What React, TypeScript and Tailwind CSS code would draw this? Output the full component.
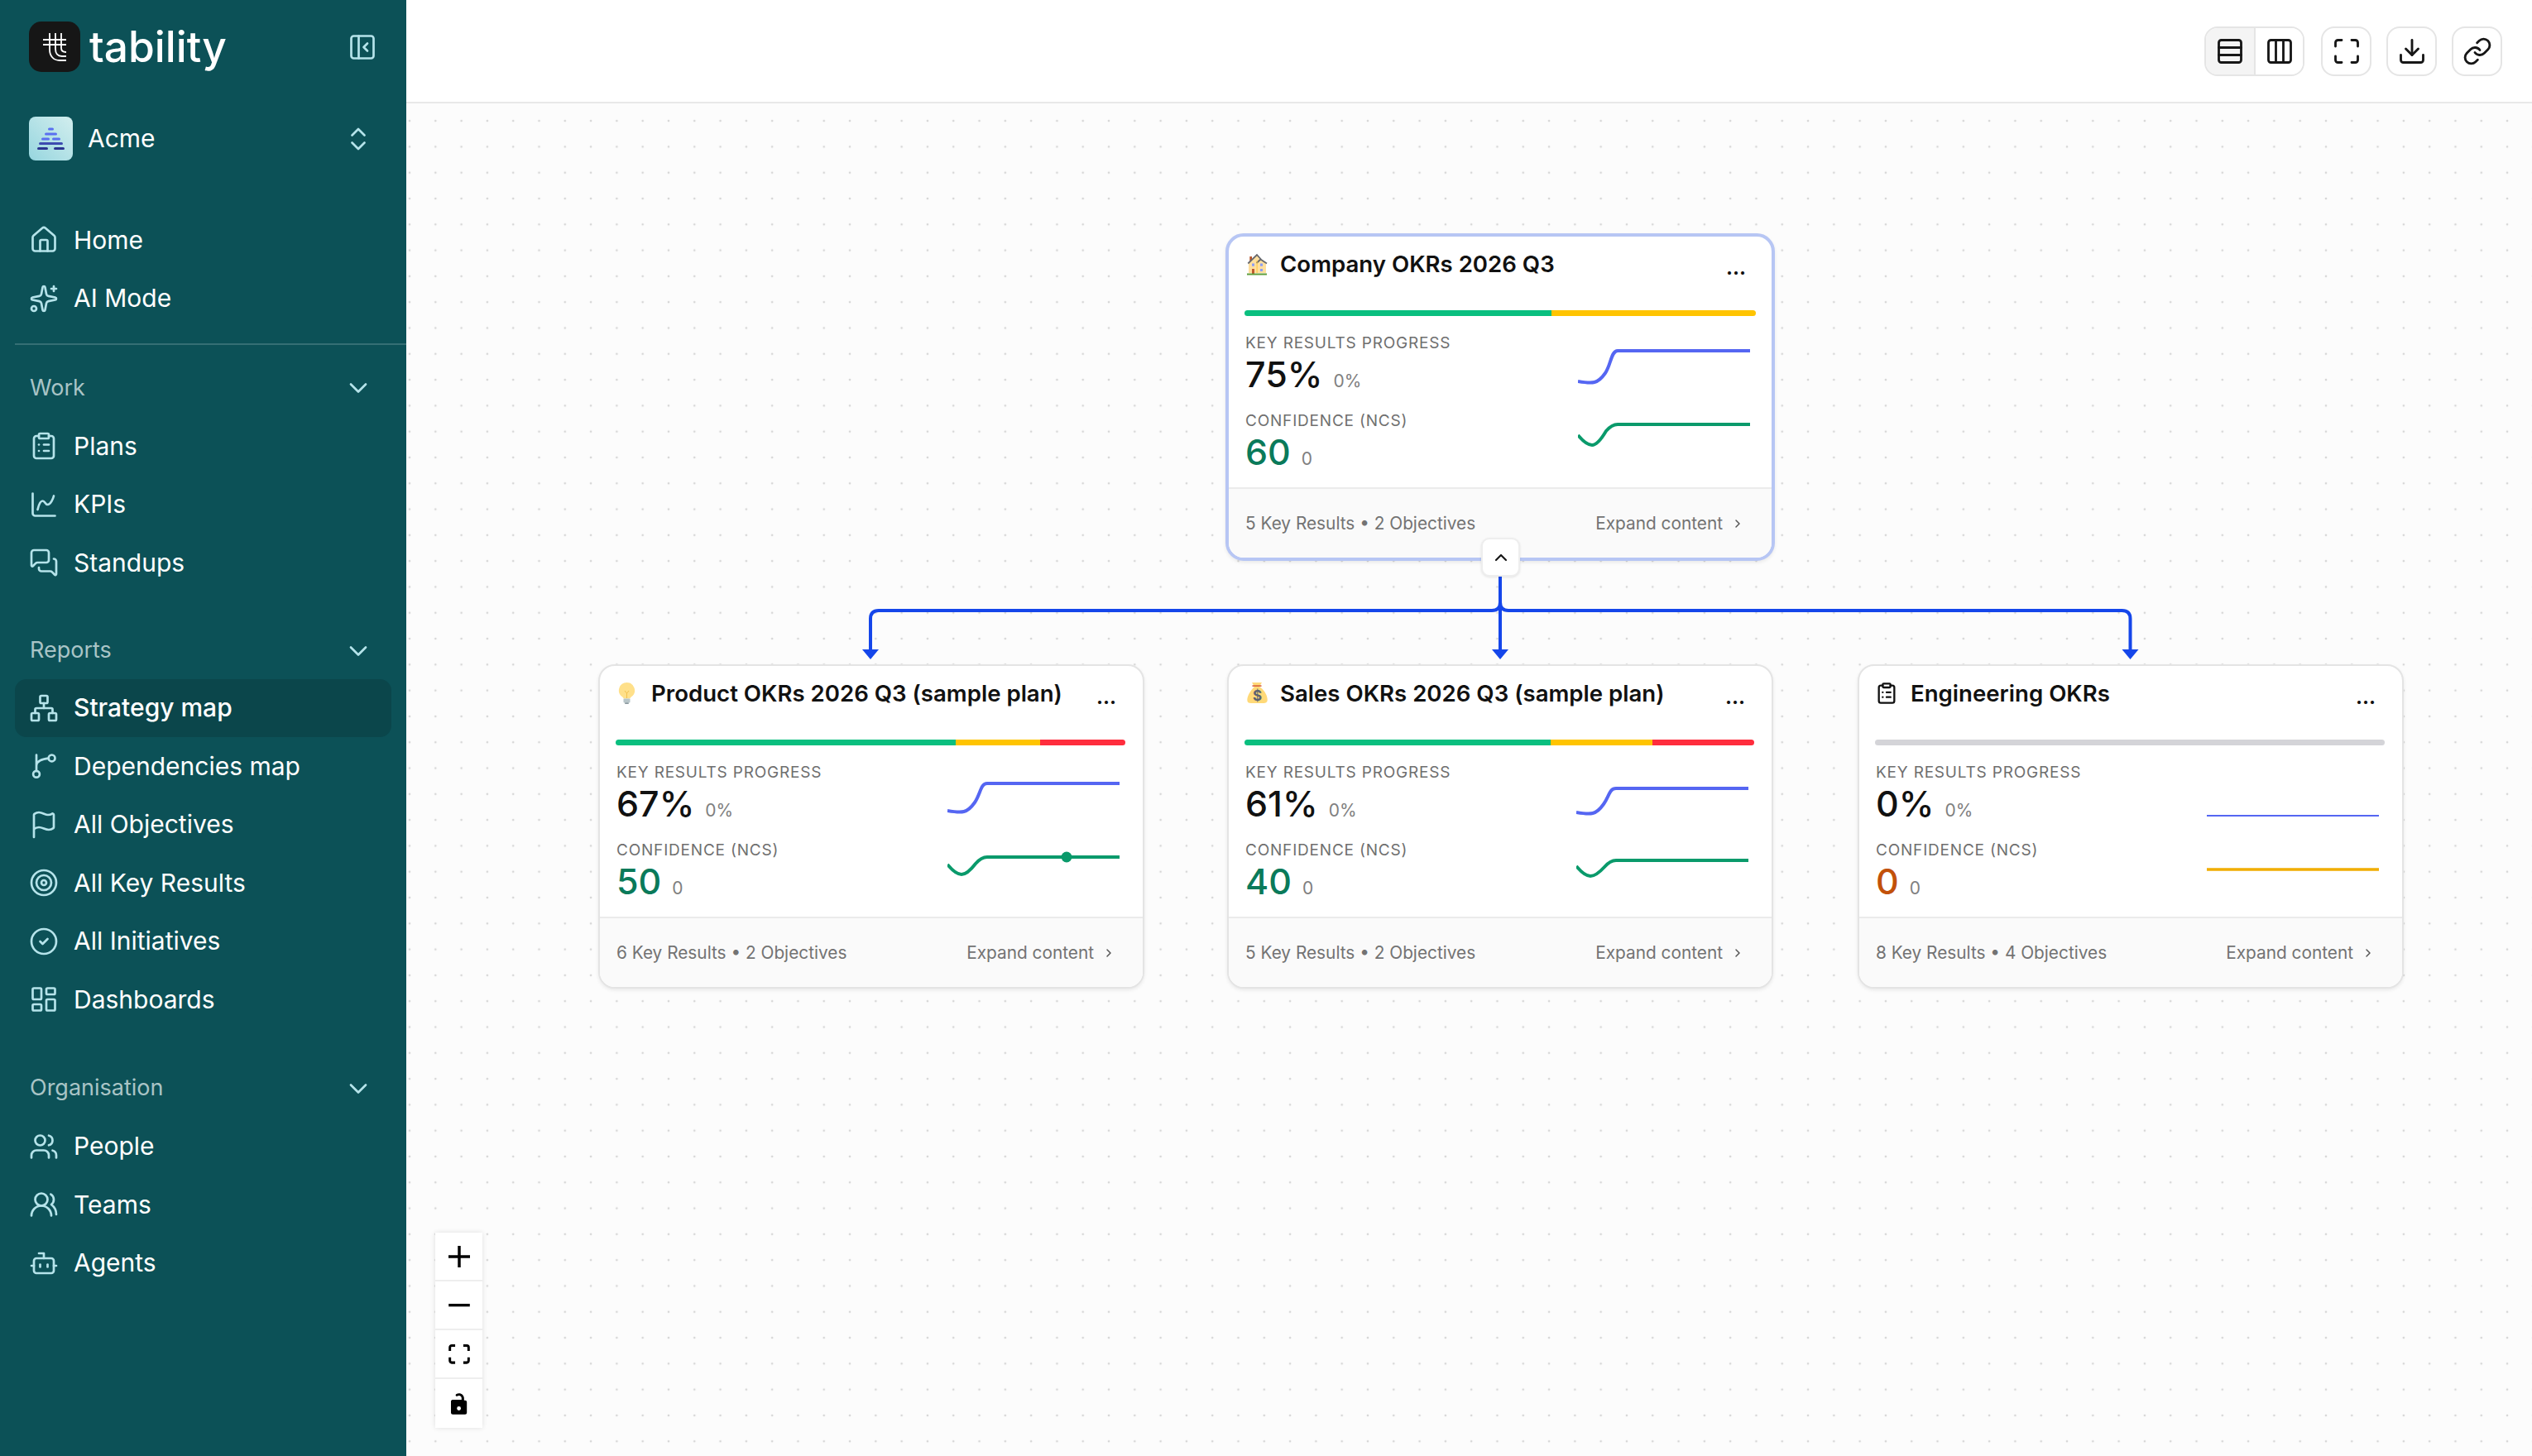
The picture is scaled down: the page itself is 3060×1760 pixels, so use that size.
import React from 'react';
import {
  Bot, ChartSpline, ChevronDown, ChevronRight, ChevronUp, ChevronsUpDown, CircleCheck, ClipboardList,
  Columns3, Download, Flag, House, LayoutDashboard, Link, Maximize, MessagesSquare, Network,
  PanelLeftClose, Rows3, Sparkles, Target, Users, UsersRound,
} from 'lucide-react';

const DependenciesIcon = ({ size, color, strokeWidth }: { size: number; color: string; strokeWidth: number }) => (
  <svg width={size} height={size} viewBox="0 0 24 24" fill="none" stroke={color} strokeWidth={strokeWidth} strokeLinecap="round">
    <circle cx="6" cy="18.5" r="2.6" />
    <circle cx="18.4" cy="5.6" r="2.6" />
    <path d="M6 3v13M15.8 5.8C10.5 6.3 6.5 7.5 6 11.5" />
  </svg>
);

const navIcon = { size: 36, color: '#b5e3ea', strokeWidth: 1.8 };

const sections = [
  {
    title: 'Work',
    gap: 'mt-[32px]',
    rowsGap: 'mt-[15px]',
    items: [
      { label: 'Plans', icon: ClipboardList },
      { label: 'KPIs', icon: ChartSpline },
      { label: 'Standups', icon: MessagesSquare },
    ],
  },
  {
    title: 'Reports',
    gap: 'mt-[51px]',
    rowsGap: 'mt-[14px]',
    items: [
      { label: 'Strategy map', icon: Network, active: true },
      { label: 'Dependencies map', icon: DependenciesIcon },
      { label: 'All Objectives', icon: Flag },
      { label: 'All Key Results', icon: Target },
      { label: 'All Initiatives', icon: CircleCheck },
      { label: 'Dashboards', icon: LayoutDashboard },
    ],
  },
  {
    title: 'Organisation',
    gap: 'mt-[52px]',
    rowsGap: 'mt-[15px]',
    items: [
      { label: 'People', icon: Users },
      { label: 'Teams', icon: UsersRound },
      { label: 'Agents', icon: Bot },
    ],
  },
];

const NavRow = ({ label, icon: Icon, active }: { label: string; icon: React.ElementType; active?: boolean }) => (
  <div className={`ml-[18px] mr-[18px] flex h-[70.5px] items-center gap-[18px] rounded-[14px] pl-[17px] ${active ? 'bg-[#0b464b]' : ''}`}>
    <Icon {...navIcon} />
    <span className={`text-[30px] text-white ${active ? 'font-medium' : ''}`}>{label}</span>
  </div>
);

const Sidebar = () => (
  <aside className="flex h-[1760px] w-[491px] shrink-0 flex-col bg-[#0c5157] pt-[26px]">
    <div className="flex items-center justify-between pl-[35px] pr-[35px]">
      <div className="flex items-center gap-[11px]">
        <div className="flex h-[61px] w-[62px] items-center justify-center rounded-[15px] bg-[#161616]">
          <svg width="62" height="61" viewBox="0 0 62 61" fill="none" stroke="#fff" strokeWidth="1.8">
            <path d="M17 22H45M17 28H45" />
            <path d="M25 14V34c0 8 5 13 12 13h8M32 14V33c0 6 3 9 8 9h5M39 14V32c0 3 2 5 6 5" />
          </svg>
        </div>
        <span className="text-[51.5px] font-medium leading-none text-white">tability</span>
      </div>
      <PanelLeftClose size={36} color="#b5e3ea" strokeWidth={1.8} />
    </div>

    <div className="mt-[54px] flex items-center justify-between pl-[35px] pr-[40px]">
      <div className="flex items-center gap-[18px]">
        <div className="h-[53px] w-[53px] rounded-[8px] bg-linear-to-tr from-[#96d6df] to-[#d2eeee]">
          <svg width="53" height="53" viewBox="0 0 53 53">
            <g fill="#5a6ff0">
              <rect x="23" y="13.5" width="7" height="3" rx="1.5" />
              <rect x="19" y="19.5" width="15" height="3" rx="1.5" />
              <rect x="15" y="25.5" width="10" height="3" rx="1.5" />
              <rect x="28" y="25.5" width="10" height="3" rx="1.5" />
            </g>
            <rect x="12" y="31" width="29" height="3" rx="1.5" fill="#3d4bb0" />
            <rect x="10" y="37" width="13" height="3" rx="1.5" fill="#2b3590" />
            <rect x="30" y="37" width="13" height="3" rx="1.5" fill="#2b3590" />
          </svg>
        </div>
        <span className="text-[30px] text-white">Acme</span>
      </div>
      <ChevronsUpDown size={36} color="#b5e3ea" strokeWidth={1.8} />
    </div>

    <nav className="mt-[61px]">
      <NavRow label="Home" icon={House} />
      <NavRow label="AI Mode" icon={Sparkles} />
    </nav>
    <div className="ml-[18px] mt-[19px] h-[2px] bg-[#356f74]" />

    {sections.map((section) => (
      <section key={section.title} className={section.gap}>
        <div className="flex h-[40px] items-center justify-between pl-[36px] pr-[40px]">
          <span className="text-[27px] text-[#a9c4c6]">{section.title}</span>
          <ChevronDown size={36} color="#b5e3ea" strokeWidth={1.8} />
        </div>
        <div className={section.rowsGap}>
          {section.items.map((item) => (
            <NavRow key={item.label} {...item} />
          ))}
        </div>
      </section>
    ))}
  </aside>
);

const TopButton = ({ children }: { children: React.ReactNode }) => (
  <div className="flex h-[60px] w-[61px] items-center justify-center rounded-[16px] border-2 border-[#e5e5e5] bg-white">{children}</div>
);

const toolIcon = { size: 36, color: '#171717', strokeWidth: 1.9 };

const TopBar = () => (
  <header className="flex h-[125px] items-center justify-end border-b-2 border-[#e8e8e8] bg-white pr-[36px]">
    <div className="flex h-[60px] w-[121px] overflow-hidden rounded-[16px] border-2 border-[#e5e5e5]">
      <div className="flex w-[60px] items-center justify-center border-r-2 border-[#e5e5e5] bg-[#f4f4f4]">
        <Rows3 {...toolIcon} />
      </div>
      <div className="flex flex-1 items-center justify-center bg-white">
        <Columns3 {...toolIcon} />
      </div>
    </div>
    <div className="ml-[20px] flex gap-[18px]">
      <TopButton><Maximize {...toolIcon} /></TopButton>
      <TopButton><Download {...toolIcon} /></TopButton>
      <TopButton><Link {...toolIcon} /></TopButton>
    </div>
  </header>
);

const HouseEmoji = () => (
  <svg width="28" height="28" viewBox="0 0 28 28">
    <rect x="6.3" y="5" width="2.7" height="6" fill="#b5532a" />
    <path d="M5 13.5 15 3l5 5 6 6v11H5z" fill="#ffdf9e" />
    <path d="M4.3 13.5 15 3l5 5.5M14.5 13 19.5 8.5 27 13.5" fill="none" stroke="#66686e" strokeWidth="1.8" />
    <rect x="14.6" y="10" width="1" height="15" fill="#ffc83d" />
    <rect x="9" y="20" width="3" height="6" fill="#c05a2f" />
    <g fill="#8c9df5">
      <rect x="9" y="13.5" width="3" height="3.2" />
      <rect x="19" y="13.5" width="3" height="3.2" />
      <rect x="19" y="20" width="3" height="3" />
    </g>
    <rect x="3" y="25.5" width="24" height="2" fill="#5f9e3a" />
  </svg>
);

const BulbEmoji = () => (
  <svg width="28" height="28" viewBox="0 0 28 28">
    <path d="M13.5 1a9.5 9.5 0 0 0-5.6 17.2c1 .8 1.6 1.6 1.6 2.3h8c0-.7.6-1.5 1.6-2.3A9.5 9.5 0 0 0 13.5 1z" fill="#ffe08a" />
    <path d="M11 11l2.5 3 2.5-3M13.5 14v6" fill="none" stroke="#f2c14e" strokeWidth="1" />
    <rect x="9.5" y="20.5" width="8" height="5" rx="1" fill="#b8c5c9" />
    <rect x="11" y="25.2" width="5" height="1.8" rx="0.9" fill="#8b999e" />
  </svg>
);

const BagEmoji = () => (
  <svg width="28" height="28" viewBox="0 0 28 28">
    <path d="M9 1h12l-3 5c5 3 10 10 9.7 16 0 3-2 4-5 4H8c-3 0-4.700-1-4.700-4C3.300 16 9 9 12 6z" fill="#ffd978" />
    <rect x="9.5" y="4.300" width="11" height="1.6" fill="#d9603a" />
    <text x="15.5" y="23" textAnchor="middle" fontSize="17" fontWeight="700" fill="#5c6270">$</text>
  </svg>
);

interface Plan {
  title: string;
  emoji: React.ReactNode;
  position: string;
  selected?: boolean;
  bar: { color: string; width: string }[];
  progress: string;
  score: string;
  scoreColor: string;
  footer: string;
  blue: [number, number];
  green: [number, number];
  dotX?: number;
}

const Sparkline = ({ plan }: { plan: Plan }) => (
  <svg width="208" height="164" viewBox="0 0 208 164" fill="none" className="-mt-[1px] mr-[7px]">
    {plan.title === 'Engineering OKRs' ? (
      <>
        <path d="M0 65H208" stroke="#5566f2" strokeWidth="2" />
        <path d="M0 130H208" stroke="#f0ad00" strokeWidth="3.5" />
      </>
    ) : (
      <>
        <path
          d={`M0 ${plan.blue[1]} C 18 ${plan.blue[1] + 3} 24 ${plan.blue[1] + 3} 33 ${plan.blue[1] - 10} C 40 ${plan.blue[1] - 20} 40 ${plan.blue[0]} 48 ${plan.blue[0]} H208`}
          stroke="#5566f2"
          strokeWidth="4"
        />
        <path
          d={`M0 ${plan.green[1]} Q 10 ${plan.green[1] + 12} 17 ${plan.green[1] + 12} Q 24 ${plan.green[1] + 12} 34 ${plan.green[0] + 8} Q 41 ${plan.green[0]} 48 ${plan.green[0]} H208`}
          stroke="#0a9a6b"
          strokeWidth="4"
        />
        {plan.dotX && <circle cx={plan.dotX} cy={plan.green[0]} r="6.5" fill="#0a9a6b" />}
      </>
    )}
  </svg>
);

const PlanCard = ({ plan }: { plan: Plan }) => (
  <div
    className={`absolute overflow-hidden bg-white shadow-[0_2px_4px_rgba(0,0,0,0.08)] ${plan.position} ${
      plan.selected ? 'rounded-[22px] border-4 border-[#b7c6f4]' : 'rounded-[20px] border-2 border-[#e4e4e4]'
    }`}
  >
    <div className={`pl-[19px] pt-[15px] ${plan.selected ? 'pr-[19px]' : 'pr-[21px]'}`}>
      <div className="flex h-[36px] items-center gap-[15px]">
        <span className="h-[28px] w-[28px] shrink-0">{plan.emoji}</span>
        <span className="text-[27.6px] font-semibold leading-[36px] text-[#111]">{plan.title}</span>
      </div>
      <div className="mt-[38px] flex h-[7px] overflow-hidden rounded-full">
        {plan.bar.map((part) => (
          <div key={part.color} className={`${part.color} ${part.width}`} />
        ))}
      </div>
      <div className="mt-[21px] flex h-[164px] justify-between">
        <div className="ml-[1px]">
          <div className="text-[19px] leading-[24px] tracking-[0.8px] text-[#6f6f6f]">KEY RESULTS PROGRESS</div>
          <div className="mt-[3px] flex h-[44px] items-baseline gap-[13px]">
            <span className="text-[43px] font-medium leading-[44px] text-[#111]">{plan.progress}</span>
            <span className="text-[21px] text-[#808080]">0%</span>
          </div>
          <div className="mt-[23px] text-[19px] leading-[24px] tracking-[0.8px] text-[#6f6f6f]">CONFIDENCE (NCS)</div>
          <div className="mt-[3px] flex h-[44px] items-baseline gap-[13px]">
            <span className={`text-[43px] font-medium leading-[44px] ${plan.scoreColor}`}>{plan.score}</span>
            <span className="text-[21px] text-[#808080]">0</span>
          </div>
        </div>
        <Sparkline plan={plan} />
      </div>
    </div>
    <div className="mt-[22px] flex h-[85px] items-center justify-between border-t-2 border-[#ebebeb] bg-[#fafafa] pl-[20px] pr-[33px] text-[20.8px] text-[#737373]">
      <span>{plan.footer}</span>
      <span className="flex items-center gap-[10px]">
        Expand content
        <ChevronRight size={16} color="#555" strokeWidth={2.2} />
      </span>
    </div>
    <span className={`absolute top-[26px] text-[24px] font-bold leading-[24px] text-[#111] ${plan.selected ? 'right-[31px]' : 'right-[32px]'}`}>...</span>
  </div>
);

const plans: Plan[] = [
  {
    title: 'Company OKRs 2026 Q3',
    emoji: <HouseEmoji />,
    position: 'left-[990px] top-[157px] w-[664px]',
    selected: true,
    bar: [
      { color: 'bg-[#0abf7f]', width: 'w-[60%]' },
      { color: 'bg-[#ffc400]', width: 'w-[40%]' },
    ],
    progress: '75%',
    score: '60',
    scoreColor: 'text-[#0a7a5a]',
    footer: '5 Key Results • 2 Objectives',
    blue: [22, 59],
    green: [111, 124],
  },
  {
    title: 'Product OKRs 2026 Q3 (sample plan)',
    emoji: <BulbEmoji />,
    position: 'left-[232px] top-[678px] w-[660px]',
    bar: [
      { color: 'bg-[#0abf7f]', width: 'w-[66.7%]' },
      { color: 'bg-[#ffc400]', width: 'w-[16.6%]' },
      { color: 'bg-[#ff2d3d]', width: 'w-[16.7%]' },
    ],
    progress: '67%',
    score: '50',
    scoreColor: 'text-[#0a7a5a]',
    footer: '6 Key Results • 2 Objectives',
    blue: [26, 59],
    green: [115, 124],
    dotX: 144,
  },
  {
    title: 'Sales OKRs 2026 Q3 (sample plan)',
    emoji: <BagEmoji />,
    position: 'left-[992px] top-[678px] w-[660px]',
    bar: [
      { color: 'bg-[#0abf7f]', width: 'w-[60%]' },
      { color: 'bg-[#ffc400]', width: 'w-[20%]' },
      { color: 'bg-[#ff2d3d]', width: 'w-[20%]' },
    ],
    progress: '61%',
    score: '40',
    scoreColor: 'text-[#0a7a5a]',
    footer: '5 Key Results • 2 Objectives',
    blue: [32, 61],
    green: [119, 126],
  },
  {
    title: 'Engineering OKRs',
    emoji: <ClipboardList size={28} color="#111" strokeWidth={2} />,
    position: 'left-[1754px] top-[678px] w-[660px]',
    bar: [{ color: 'bg-[#d4d4d8]', width: 'w-full' }],
    progress: '0%',
    score: '0',
    scoreColor: 'text-[#c2510a]',
    footer: '8 Key Results • 4 Objectives',
    blue: [65, 65],
    green: [130, 130],
  },
];

const Edges = () => (
  <svg className="pointer-events-none absolute left-0 top-0" width="2569" height="1635" fill="none" stroke="#1546ea" strokeWidth="4">
    <path d="M1322 572V664" />
    <path d="M1322 603Q1322 613 1312 613H571Q561 613 561 623V664" />
    <path d="M1322 603Q1322 613 1332 613H2073.5Q2083.5 613 2083.5 623V664" />
    <g fill="#1546ea" stroke="none">
      <path d="M551 660H571L561 672z" />
      <path d="M1312 660H1332L1322 672z" />
      <path d="M2073.5 660H2093.5L2083.5 672z" />
    </g>
  </svg>
);

const ControlButton = ({ children, last }: { children: React.ReactNode; last?: boolean }) => (
  <div className={`flex h-[59px] items-center justify-center bg-white ${last ? '' : 'border-b-2 border-[#eeeeee]'}`}>{children}</div>
);

const Controls = () => (
  <div className="absolute left-[35px] top-[1365px] w-[57px] shadow-[0_0_6px_rgba(0,0,0,0.12)]">
    <ControlButton>
      <svg width="26" height="26" viewBox="0 0 32 32"><path d="M32 18.133H18.133V32h-4.266V18.133H0v-4.266h13.867V0h4.266v13.867H32z" /></svg>
    </ControlButton>
    <ControlButton>
      <svg width="26" height="4" viewBox="0 0 32 5"><path d="M0 0h32v4.2H0z" /></svg>
    </ControlButton>
    <ControlButton>
      <svg width="26" height="24" viewBox="0 0 32 30">
        <path d="M3.692 4.63c0-.53.4-.938.939-.938h5.215V0H4.708C2.13 0 0 2.054 0 4.63v5.216h3.692V4.631zM27.354 0h-5.2v3.692h5.17c.53 0 .984.4.984.939v5.215H32V4.631A4.624 4.624 0 0027.354 0zm.954 24.83c0 .532-.4.94-.939.94h-5.215v3.768h5.215c2.577 0 4.631-2.13 4.631-4.707v-5.139h-3.692v5.139zm-23.677.94c-.531 0-.939-.4-.939-.94v-5.138H0v5.139c0 2.577 2.13 4.707 4.708 4.707h5.138V25.77H4.631z" />
      </svg>
    </ControlButton>
    <ControlButton last>
      <svg width="20" height="26" viewBox="0 0 25 32">
        <path d="M21.333 10.667H19.81V7.619C19.81 3.429 16.38 0 12.19 0c-1.523 0-3.047.457-4.38 1.371-.762.571-.99 1.714-.42 2.476.572.762 1.715.99 2.477.42.686-.458 1.333-.762 2.323-.762 2.095 0 3.81 1.714 3.81 3.81v2.476H2.667A2.667 2.667 0 000 13.333v16A2.667 2.667 0 002.667 32h18.666A2.667 2.667 0 0024 29.333v-16a2.667 2.667 0 00-2.667-2.666zM12 25.905a3.048 3.048 0 110-6.096 3.048 3.048 0 010 6.096z" />
      </svg>
    </ControlButton>
  </div>
);

const App = () => (
  <div className="flex h-[1760px] w-[3060px] overflow-hidden bg-white [font-family:Inter,sans-serif]">
    <Sidebar />
    <main className="flex min-w-0 flex-1 flex-col">
      <TopBar />
      <div className="relative flex-1 bg-[#fcfcfc] bg-[radial-gradient(circle,#d6d6d6_1.3px,transparent_1.6px)] bg-[size:31.3px_31.3px] bg-[position:-11.65px_5.45px]">
        <Edges />
        {plans.map((plan) => (
          <PlanCard key={plan.title} plan={plan} />
        ))}
        <div className="absolute left-[1299px] top-[525px] flex h-[47px] w-[47px] items-center justify-center rounded-[10px] border-2 border-[#eeeeee] bg-white shadow-[0_1px_3px_rgba(0,0,0,0.1)]">
          <ChevronUp size={24} color="#171717" strokeWidth={2.2} />
        </div>
        <Controls />
      </div>
    </main>
  </div>
);

export default App;
